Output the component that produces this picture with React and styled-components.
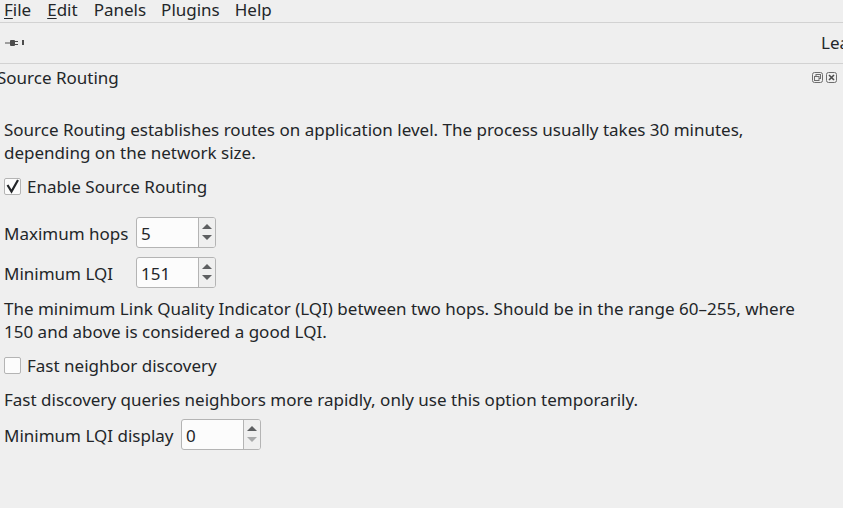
import React from 'react';
import styled, { createGlobalStyle } from 'styled-components';

const GlobalStyle = createGlobalStyle`
  html, body {
    margin: 0;
    padding: 0;
    background: #efefef;
  }
  body {
    font-family: "Noto Sans", sans-serif;
    font-size: 17px;
    color: #232629;
  }
`;

const Window = styled.div`
  width: 843px;
  height: 508px;
  overflow: hidden;
  background: #efefef;
  display: flex;
  flex-direction: column;
`;

const MenuBar = styled.div`
  height: 22px;
  flex: none;
  display: flex;
  align-items: flex-start;
  gap: 15px;
  padding-left: 4px;
  border-bottom: 1px solid #d2d2d2;
`;

const MenuItem = styled.span`
  line-height: 19px;
  margin-right: ${p => (p.$wide ? '1px' : '0')};
  u {
    text-underline-offset: 2px;
    text-decoration-thickness: 1px;
  }
`;

const ToolBar = styled.div`
  height: 40px;
  flex: none;
  display: flex;
  align-items: center;
  padding-left: 5px;
  border-bottom: 1px solid #d2d2d2;
`;

const ToolLabel = styled.span`
  margin-left: auto;
  width: 22px;
  overflow: hidden;
  white-space: nowrap;
  line-height: 20px;
`;

const PlugIcon = styled.svg`
  width: 20px;
  height: 8px;
`;

const DockHeader = styled.div`
  height: 29px;
  flex: none;
  display: flex;
  align-items: center;
  padding-right: 6px;
`;

const DockTitle = styled.span`
  margin-left: -3px;
  margin-top: -2px;
  flex: 1;
`;

const DockButtons = styled.div`
  display: flex;
  gap: 3px;
  margin-top: -3px;
`;

const DockIcon = styled.svg`
  width: 11px;
  height: 11px;
`;

const Panel = styled.div`
  padding: 25px 4px 0;
  display: flex;
  flex-direction: column;
`;

const Paragraph = styled.p`
  margin: ${p => p.$margin || '0'};
  line-height: 23px;
`;

const CheckRow = styled.label`
  display: flex;
  align-items: center;
  gap: 6px;
  height: 24px;
  margin: ${p => p.$margin || '0'};
`;

const CheckBox = styled.span`
  width: 17px;
  height: 17px;
  box-sizing: border-box;
  border: 1px solid #b4b4b4;
  border-radius: 2px;
  background: #fcfcfc;
  display: flex;
  align-items: center;
  justify-content: center;
`;

const FieldRow = styled.div`
  display: flex;
  align-items: center;
  height: 32px;
  margin: ${p => p.$margin || '0'};
`;

const FieldLabel = styled.span`
  width: ${p => p.$width}px;
  flex: none;
  padding-top: 2px;
`;

const SpinBox = styled.div`
  width: 80px;
  height: 31px;
  box-sizing: border-box;
  border: 1px solid #b4b4b4;
  border-radius: 3px;
  background: #fcfcfc;
  display: flex;
`;

const SpinValue = styled.span`
  flex: 1;
  padding-left: 4px;
  line-height: 31px;
`;

const SpinArrows = styled.div`
  width: 16px;
  flex: none;
  background: #efefef;
  border-left: 1px solid #b4b4b4;
  border-radius: 0 2px 2px 0;
  display: flex;
  flex-direction: column;
  align-items: center;
  justify-content: center;
  gap: 6px;
`;

const Arrow = styled.span`
  width: 0;
  height: 0;
  border-left: 5px solid transparent;
  border-right: 5px solid transparent;
  ${p => (p.$down ? 'border-top' : 'border-bottom')}: 5px solid ${p => (p.$off ? '#a8a9aa' : '#5d5f61')};
`;

const Spin = ({ value, min }) => (
  <SpinBox>
    <SpinValue>{value}</SpinValue>
    <SpinArrows>
      <Arrow />
      <Arrow $down $off={min} />
    </SpinArrows>
  </SpinBox>
);

export default function App() {
  return (
    <>
      <GlobalStyle />
      <Window>
        <MenuBar>
          <MenuItem $wide><u>F</u>ile</MenuItem>
          <MenuItem $wide><u>E</u>dit</MenuItem>
          <MenuItem>Panels</MenuItem>
          <MenuItem>Plugins</MenuItem>
          <MenuItem>Help</MenuItem>
        </MenuBar>
        <ToolBar>
          <PlugIcon viewBox="0 0 20 8">
            <path d="M0 4h5M10 2.5h3M10 5.5h3" stroke="#4d4d4d" strokeWidth="1" fill="none" />
            <rect x="5" y="1" width="5" height="6" rx="1" fill="#4d4d4d" />
            <rect x="17" y="1" width="2" height="5" fill="#4d4d4d" />
          </PlugIcon>
          <ToolLabel>Leave</ToolLabel>
        </ToolBar>
        <DockHeader>
          <DockTitle>Source Routing</DockTitle>
          <DockButtons>
            <DockIcon viewBox="0 0 11 11">
              <rect x=".5" y=".5" width="10" height="10" rx="2" fill="none" stroke="#6e6e6e" />
              <rect x="4" y="2.5" width="4.5" height="4" fill="none" stroke="#6e6e6e" />
              <rect x="2.5" y="4.5" width="4.5" height="4" fill="#efefef" stroke="#6e6e6e" />
            </DockIcon>
            <DockIcon viewBox="0 0 11 11">
              <rect x=".5" y=".5" width="10" height="10" rx="2" fill="none" stroke="#6e6e6e" />
              <path d="M3 3l5 5M8 3l-5 5" stroke="#4d4d4d" strokeWidth="1.6" />
            </DockIcon>
          </DockButtons>
        </DockHeader>
        <Panel>
          <Paragraph>
            Source Routing establishes routes on application level. The process usually takes 30 minutes,
            <br />
            depending on the network size.
          </Paragraph>
          <CheckRow $margin="10px 0 0">
            <CheckBox>
              <svg width="15" height="15" viewBox="0 0 15 15">
                <path d="M2.5 6l4 6.5 6.5-11.5" stroke="#232629" strokeWidth="2.2" fill="none" />
              </svg>
            </CheckBox>
            Enable Source Routing
          </CheckRow>
          <FieldRow $margin="18px 0 0">
            <FieldLabel $width={132}>Maximum hops</FieldLabel>
            <Spin value="5" />
          </FieldRow>
          <FieldRow $margin="8px 0 0">
            <FieldLabel $width={132}>Minimum LQI</FieldLabel>
            <Spin value="151" />
          </FieldRow>
          <Paragraph $margin="9px 0 0">
            The minimum Link Quality Indicator (LQI) between two hops. Should be in the range 60–255, where
            <br />
            150 and above is considered a good LQI.
          </Paragraph>
          <CheckRow $margin="10px 0 0">
            <CheckBox />
            Fast neighbor discovery
          </CheckRow>
          <Paragraph $margin="11px 0 0">
            Fast discovery queries neighbors more rapidly, only use this option temporarily.
          </Paragraph>
          <FieldRow $margin="7px 0 0">
            <FieldLabel $width={177}>Minimum LQI display</FieldLabel>
            <Spin value="0" min />
          </FieldRow>
        </Panel>
      </Window>
    </>
  );
}
